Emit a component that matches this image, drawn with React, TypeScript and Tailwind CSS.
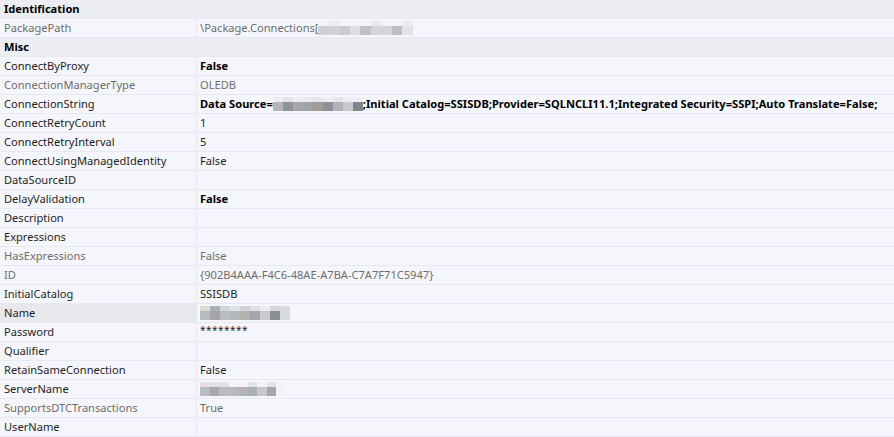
import React from 'react'

type Row = {
  name: string
  value?: React.ReactNode
  muted?: boolean
  bold?: boolean
  selected?: boolean
  category?: boolean
}

// pixelated blur blocks, top strip + bottom strip
function Mosaic({ top, bottom, w = 10 }: { top: string[]; bottom: string[]; w?: number }) {
  return (
    <span className="inline-flex flex-col align-middle">
      <span className="flex h-[5px]">
        {top.map((c, i) => (
          <span key={i} style={{ background: c, width: w }} />
        ))}
      </span>
      <span className="flex h-[9px]">
        {bottom.map((c, i) => (
          <span key={i} style={{ background: c, width: w }} />
        ))}
      </span>
    </span>
  )
}

const rows: Row[] = [
  { name: 'Identification', category: true },
  {
    name: 'PackagePath',
    muted: true,
    value: (
      <span className="flex items-center">
        \Package.Connections[
        <Mosaic
          top={['#f3f3f7', '#ececf1', '#f3f3f7', '#f3f3f7', '#f3f3f7', '#e9e9ee', '#f3f3f7', '#f3f3f7', '#eaeaef']}
          bottom={['#cfcfd4', '#d2d2d6', '#cbcbd0', '#dedee2', '#c0c0c5', '#d6d6da', '#d3d3d8', '#bdbdc3', '#e2e2ea']}
          w={10.5}
        />
      </span>
    ),
  },
  { name: 'Misc', category: true },
  { name: 'ConnectByProxy', value: 'False', bold: true },
  { name: 'ConnectionManagerType', value: 'OLEDB', muted: true },
  {
    name: 'ConnectionString',
    bold: true,
    value: (
      <span className="flex items-center">
        Data Source=
        <Mosaic
          top={['#eeeef2', '#e4e4e9', '#eeeef2', '#e9e9ed', '#e6e6ea', '#eeeef2', '#e7e7eb', '#eeeef2', '#eeeef2']}
          bottom={['#b5b5ba', '#8f939b', '#a6a6ab', '#9ea3aa', '#a09c96', '#8e8e94', '#b3b3b7', '#c9c9cd', '#80848c']}
        />
        ;Initial Catalog=SSISDB;Provider=SQLNCLI11.1;Integrated Security=SSPI;Auto Translate=False;
      </span>
    ),
  },
  { name: 'ConnectRetryCount', value: '1' },
  { name: 'ConnectRetryInterval', value: '5' },
  { name: 'ConnectUsingManagedIdentity', value: 'False' },
  { name: 'DataSourceID' },
  { name: 'DelayValidation', value: 'False', bold: true },
  { name: 'Description' },
  { name: 'Expressions' },
  { name: 'HasExpressions', value: 'False', muted: true },
  { name: 'ID', value: '{902B4AAA-F4C6-48AE-A7BA-C7A7F71C5947}', muted: true },
  { name: 'InitialCatalog', value: 'SSISDB' },
  {
    name: 'Name',
    selected: true,
    value: (
      <Mosaic
        top={['#e2d8d4', '#a9b1ba', '#d3d6da', '#e1e3e6', '#cfd1d5', '#dfe0e3', '#ebeced', '#d6d8db', '#dadbde']}
        bottom={['#b7bcc2', '#a5a5a8', '#b9bdc0', '#b4b7b8', '#b2b2ae', '#a6a6aa', '#c9c9ce', '#8b8e92', '#d8d9dc']}
      />
    ),
  },
  { name: 'Password', value: <span className="text-[10px] -translate-y-[2px] tracking-[0.5px]">********</span> },
  { name: 'Qualifier' },
  { name: 'RetainSameConnection', value: 'False' },
  {
    name: 'ServerName',
    value: (
      <Mosaic
        top={['#ecdcdc', '#dfe1e6', '#e2e2ea', '#f3f3f7', '#f3f3f7', '#e3e0e6', '#f3f3f7', '#e4e3ea', '#f3f3f7']}
        bottom={['#b8bcc0', '#aaa6af', '#b9bcbb', '#bbb8c3', '#b7b4b7', '#a7b0b8', '#c7c8cc', '#a9a6ab', '#f3f3f7']}
        w={9.5}
      />
    ),
  },
  { name: 'SupportsDTCTransactions', value: 'True', muted: true },
  { name: 'UserName' },
]

export default function App() {
  return (
    <div
      className="w-[894px] h-[437px] overflow-hidden bg-[#f5f6fb] text-[11.1px] text-[#1e1e1e]"
      style={{ fontFamily: '"Noto Sans", "Open Sans", sans-serif' }}
    >
      {rows.map((r, i) =>
        r.category ? (
          <div key={i} className="h-[19px] flex items-center bg-[#ecedf2] border-b border-[#e9eaf0] pl-[4px] font-bold text-black">
            {r.name}
          </div>
        ) : (
          <div key={i} className="h-[19px] flex border-b border-[#e8e9f0]">
            <div
              className={`w-[197px] shrink-0 flex items-center pl-[4px] border-r border-[#e6e7ee] whitespace-nowrap ${
                r.selected ? 'bg-[#e9e9ed]' : ''
              } ${r.muted ? 'text-[#6d6d6d]' : ''}`}
            >
              {r.name}
            </div>
            <div
              className={`flex-1 flex items-center pl-[3px] whitespace-nowrap ${r.bold ? 'font-bold text-black' : ''} ${
                r.muted ? 'text-[#6d6d6d]' : ''
              }`}
            >
              {r.value}
            </div>
          </div>
        )
      )}
    </div>
  )
}
